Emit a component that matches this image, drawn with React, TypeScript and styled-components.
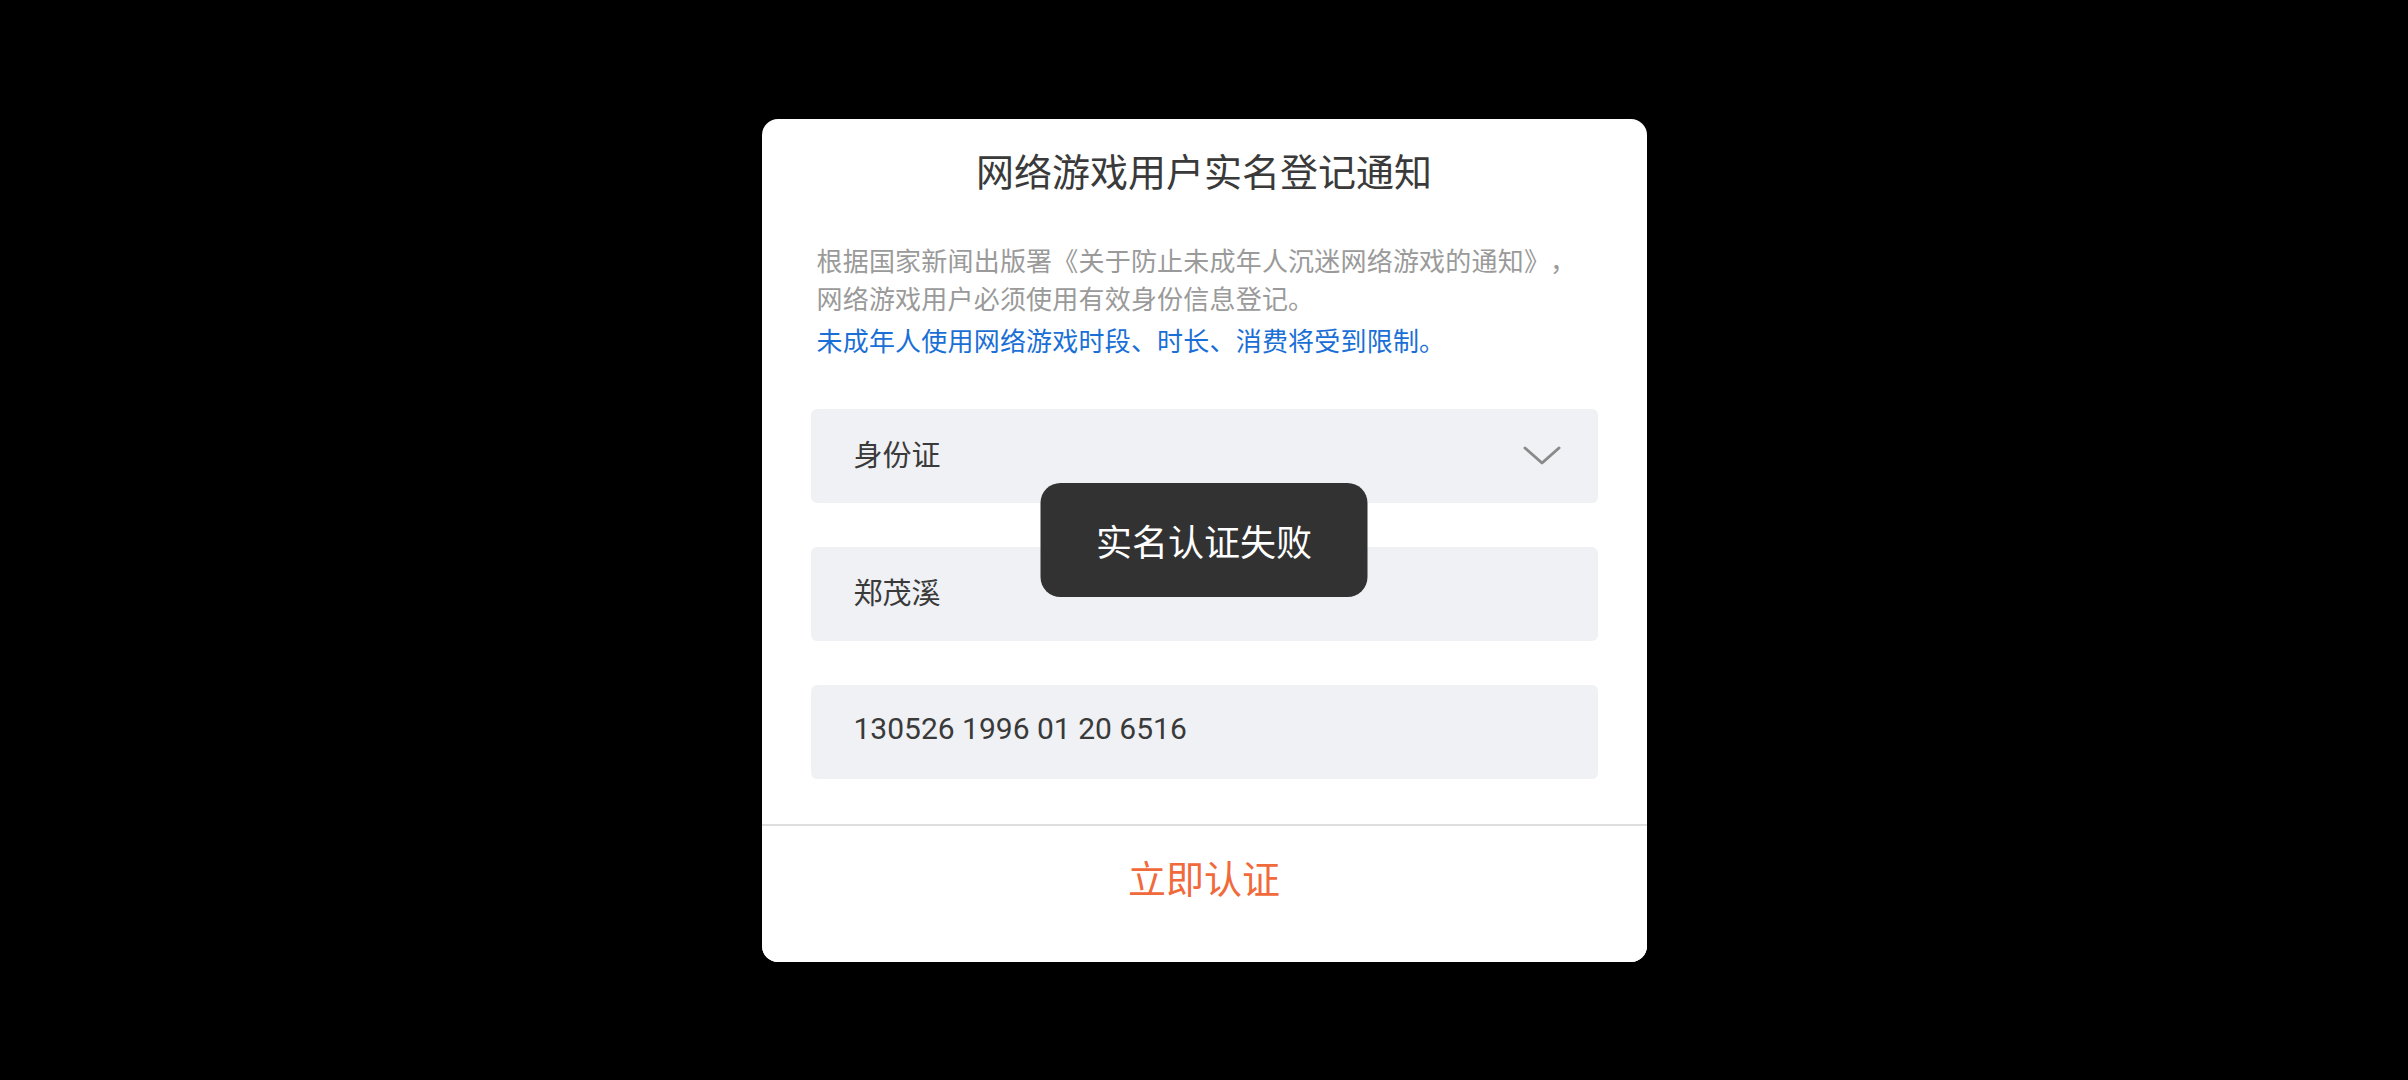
import styled, { createGlobalStyle } from "styled-components";

const GlobalStyle = createGlobalStyle`
  html, body {
    margin: 0;
    padding: 0;
    background: #000;
  }
  body {
    font-family: Roboto, "Noto Sans CJK SC", "Noto Sans", sans-serif;
  }
`;

const Screen = styled.div`
  position: relative;
  width: 2408px;
  height: 1080px;
  background: #000;
  display: flex;
  justify-content: center;
  align-items: center;
`;

const Dialog = styled.div`
  width: 885px;
  background: #fff;
  border-radius: 16px;
  overflow: hidden;
  display: flex;
  flex-direction: column;
`;

const Body = styled.div`
  padding: 27px 49px 45px;
`;

const Title = styled.h1`
  margin: 0;
  font-size: 38px;
  font-weight: 400;
  line-height: 54px;
  text-align: center;
  color: #3a3a3a;
`;

const Notice = styled.div`
  margin: 43px 0 48px;
  padding: 0 6px;
  font-size: 26px;
  line-height: 38px;
  letter-spacing: 0.2px;
  text-spacing-trim: space-all;
`;

const NoticeLine = styled.p<{ $highlight?: boolean }>`
  margin: ${(p) => (p.$highlight ? "4px 0 0" : "0")};
  color: ${(p) => (p.$highlight ? "#1a6fd6" : "#9a9a9a")};
`;

const Fields = styled.div`
  display: flex;
  flex-direction: column;
  gap: 44px;
`;

const Field = styled.div`
  height: 94px;
  box-sizing: border-box;
  padding: 0 37px 0 43px;
  background: #eff1f4;
  border-radius: 6px;
  display: flex;
  align-items: center;
  justify-content: space-between;
  font-size: 29px;
  color: #3a3a3a;
`;

const FieldText = styled.span<{ $digits?: boolean }>`
  margin-top: -6px;
  font-size: ${(p) => (p.$digits ? "30px" : "inherit")};
`;

const Divider = styled.div`
  height: 2px;
  background: #dedede;
`;

const SubmitButton = styled.button`
  height: 136px;
  border: 0;
  background: #fff;
  font-family: inherit;
  font-size: 38px;
  color: #f06a3c;
  cursor: pointer;
  padding: 0 0 34px;
`;

const Toast = styled.div`
  position: absolute;
  left: 50%;
  top: 50%;
  transform: translate(-50%, -50%);
  width: 327px;
  height: 114px;
  box-sizing: border-box;
  border-radius: 20px;
  background: #323232;
  color: #fff;
  font-size: 36px;
  display: flex;
  align-items: center;
  justify-content: center;
`;

function Chevron() {
  return (
    <svg width="38" height="22" viewBox="0 0 38 22" fill="none">
      <path
        d="M2 3 L19 18 L36 3"
        stroke="#8a8a8a"
        strokeWidth="3"
        strokeLinecap="round"
        strokeLinejoin="round"
      />
    </svg>
  );
}

export default function App() {
  return (
    <Screen>
      <GlobalStyle />
      <Dialog>
        <Body>
          <Title>网络游戏用户实名登记通知</Title>
          <Notice>
            <NoticeLine>
              根据国家新闻出版署《关于防止未成年人沉迷网络游戏的通知》，
            </NoticeLine>
            <NoticeLine>网络游戏用户必须使用有效身份信息登记。</NoticeLine>
            <NoticeLine $highlight>
              未成年人使用网络游戏时段、时长、消费将受到限制。
            </NoticeLine>
          </Notice>
          <Fields>
            <Field>
              <FieldText>身份证</FieldText>
              <Chevron />
            </Field>
            <Field>
              <FieldText>郑茂溪</FieldText>
            </Field>
            <Field>
              <FieldText $digits>130526 1996 01 20 6516</FieldText>
            </Field>
          </Fields>
        </Body>
        <Divider />
        <SubmitButton>立即认证</SubmitButton>
      </Dialog>
      <Toast>实名认证失败</Toast>
    </Screen>
  );
}
